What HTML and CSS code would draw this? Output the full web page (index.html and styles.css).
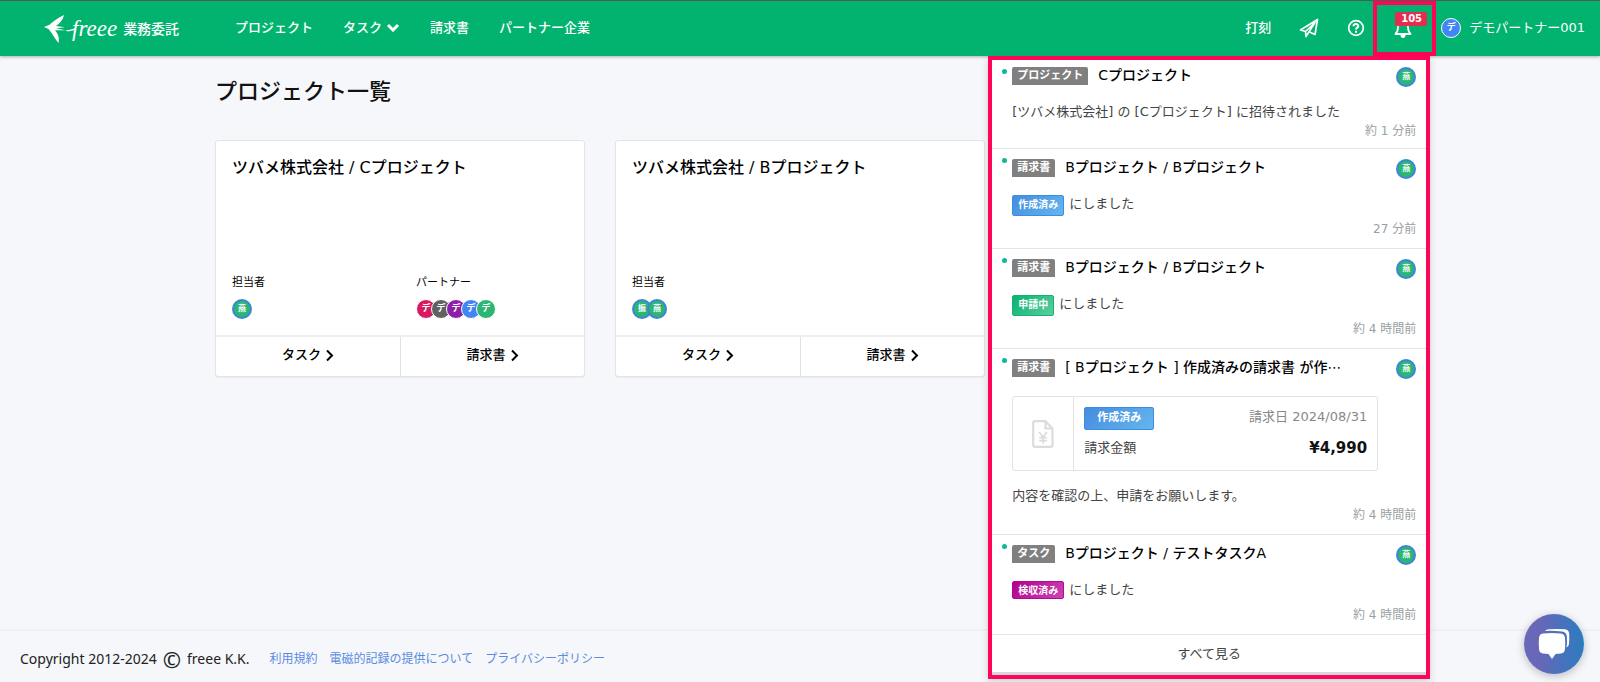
FILE: index.html
```html
<!DOCTYPE html>
<html lang="ja">
<head>
  <meta charset="UTF-8">
  <title>プロジェクト一覧 | freee 業務委託</title>
  <meta name="viewport" content="width=device-width, initial-scale=1.0">
  <link rel="stylesheet" href="styles.css">
</head>
<body>
  <header class="header">
    <a class="logo" href="#">
      <svg class="logo-bird" width="32" height="30" viewBox="0 0 32 30" fill="#fff">
        <path d="M0 13 L5.500 10.800 C9 7.500 14 4 20 1 C19 6 15.500 9.500 12 12 L21 13.200 L12 14.300 L21.500 16.200 L11 16.200 C14.500 20 15.500 24 14.500 29 C11 25 8 19 4.500 15 Z"/>
        <path d="M22.500 16.500 C25 17.500 27 15.500 32 15" fill="none" stroke="#fff" stroke-width="1.300"/>
      </svg>
      <span class="logo-name">freee</span>
      <span class="logo-product">業務委託</span>
    </a>
    <nav class="nav">
      <a href="#">プロジェクト</a>
      <a href="#">タスク<svg class="nav-arrow" width="14" height="9" viewBox="0 0 14 9"><path d="M2 2 L7 7 L12 2" fill="none" stroke="#fff" stroke-width="3"/></svg></a>
      <a href="#">請求書</a>
      <a href="#">パートナー企業</a>
    </nav>
    <div class="tools">
      <a class="clock" href="#">打刻</a>
      <button class="tool" aria-label="お知らせ">
        <svg width="20" height="20" viewBox="0 0 20 20" fill="none" stroke="#fff" stroke-width="1.700" stroke-linejoin="round"><path d="M1.500 12 L18.500 1.500 L16 16.500 L10 13.800 L7 18.500 L6.500 13.500 Z M6.500 13.500 L16 4.500 L10 13.800"/></svg>
      </button>
      <button class="tool" aria-label="ヘルプ">
        <svg width="18" height="18" viewBox="0 0 18 18" fill="none" stroke="#fff" stroke-width="2"><circle cx="9" cy="9" r="7.300" stroke-width="1.700"/><path d="M6.500 7.200 C6.700 4.300 11.500 4.500 11.300 7.200 C11.200 8.700 9 8.700 9 10.500"/><path d="M9 11.800 V13.800"/></svg>
      </button>
      <div class="notice">
        <button class="bell" aria-label="通知">
          <svg width="18" height="20" viewBox="0 0 18 20"><path d="M1.500 15 C4 12.500 4 11 4 8 C4 5 6 3 9 3 C12 3 14 5 14 8 C14 11 14 12.500 16.500 15 Z" fill="none" stroke="#fff" stroke-width="1.800" stroke-linejoin="round"/><path d="M6.500 16 H11.500 A2.500 3 0 0 1 6.500 16 Z" fill="#fff"/></svg>
          <span class="count">105</span>
        </button>
        <div class="panel">
          <article class="item">
            <div class="item-head">
              <span class="kind">プロジェクト</span>
              <h3>Cプロジェクト</h3>
              <span class="avatar staff">燕</span>
            </div>
            <div class="item-body">
              <p>[ツバメ株式会社] の [Cプロジェクト] に招待されました</p>
            </div>
            <time>約 1 分前</time>
          </article>
          <article class="item">
            <div class="item-head">
              <span class="kind">請求書</span>
              <h3>Bプロジェクト / Bプロジェクト</h3>
              <span class="avatar staff">燕</span>
            </div>
            <div class="item-body status-body">
              <span class="status created">作成済み</span>
              <p>にしました</p>
            </div>
            <time>27 分前</time>
          </article>
          <article class="item">
            <div class="item-head">
              <span class="kind">請求書</span>
              <h3>Bプロジェクト / Bプロジェクト</h3>
              <span class="avatar staff">燕</span>
            </div>
            <div class="item-body status-body">
              <span class="status applied">申請中</span>
              <p>にしました</p>
            </div>
            <time>約 4 時間前</time>
          </article>
          <article class="item">
            <div class="item-head">
              <span class="kind">請求書</span>
              <h3>[ Bプロジェクト ] 作成済みの請求書 が作⋯</h3>
              <span class="avatar staff">燕</span>
            </div>
            <div class="item-body">
              <div class="invoice">
                <div class="invoice-icon">
                  <svg width="22" height="28" viewBox="0 0 22 28" fill="none" stroke="#dcdcdc" stroke-width="2.200" stroke-linejoin="round"><path d="M3 1.200 H13.500 L20.500 8.500 V25 Q20.500 26.800 18.700 26.800 H3 Q1.200 26.800 1.200 25 V3 Q1.200 1.200 3 1.200 Z M13.500 1.500 V8.500 H20.500"/><path d="M7 12 L11 17 L15 12 M11 17 V23.500 M7.200 17.600 H14.800 M7.200 20.600 H14.800" stroke-width="1.700"/></svg>
                </div>
                <div class="invoice-info">
                  <div class="invoice-row">
                    <span class="status created wide">作成済み</span>
                    <span class="date">請求日 2024/08/31</span>
                  </div>
                  <div class="invoice-row">
                    <span>請求金額</span>
                    <strong class="amount">¥4,990</strong>
                  </div>
                </div>
              </div>
              <p>内容を確認の上、申請をお願いします。</p>
            </div>
            <time>約 4 時間前</time>
          </article>
          <article class="item">
            <div class="item-head">
              <span class="kind">タスク</span>
              <h3>Bプロジェクト / テストタスクA</h3>
              <span class="avatar staff">燕</span>
            </div>
            <div class="item-body status-body">
              <span class="status accepted">検収済み</span>
              <p>にしました</p>
            </div>
            <time>約 4 時間前</time>
          </article>
          <a class="see-all" href="#">すべて見る</a>
        </div>
      </div>
      <a class="user" href="#"><span class="avatar blue">デ</span>デモパートナー001</a>
    </div>
  </header>

  <main class="main">
    <h1>プロジェクト一覧</h1>
    <div class="projects">
      <section class="project">
        <h2>ツバメ株式会社 / Cプロジェクト</h2>
        <div class="members">
          <div>
            <div class="label">担当者</div>
            <div class="avatars"><span class="avatar staff">燕</span></div>
          </div>
          <div>
            <div class="label">パートナー</div>
            <div class="avatars">
              <span class="avatar red">デ</span>
              <span class="avatar gray">デ</span>
              <span class="avatar purple">デ</span>
              <span class="avatar blue">デ</span>
              <span class="avatar green">デ</span>
            </div>
          </div>
        </div>
        <div class="links">
          <a href="#">タスク<svg width="8" height="13" viewBox="0 0 8 13"><path d="M1 1.500 L6 6.500 L1 11.500" fill="none" stroke="#000" stroke-width="2"/></svg></a>
          <a href="#">請求書<svg width="8" height="13" viewBox="0 0 8 13"><path d="M1 1.500 L6 6.500 L1 11.500" fill="none" stroke="#000" stroke-width="2"/></svg></a>
        </div>
      </section>
      <section class="project">
        <h2>ツバメ株式会社 / Bプロジェクト</h2>
        <div class="members">
          <div>
            <div class="label">担当者</div>
            <div class="avatars"><span class="avatar staff">振</span><span class="avatar staff">燕</span></div>
          </div>
        </div>
        <div class="links">
          <a href="#">タスク<svg width="8" height="13" viewBox="0 0 8 13"><path d="M1 1.500 L6 6.500 L1 11.500" fill="none" stroke="#000" stroke-width="2"/></svg></a>
          <a href="#">請求書<svg width="8" height="13" viewBox="0 0 8 13"><path d="M1 1.500 L6 6.500 L1 11.500" fill="none" stroke="#000" stroke-width="2"/></svg></a>
        </div>
      </section>
    </div>
  </main>

  <footer class="footer">
    <div class="copyright">Copyright 2012-2024 <span class="copy-mark">©</span> freee K.K.</div>
    <a href="#">利用規約</a>
    <a href="#">電磁的記録の提供について</a>
    <a href="#">プライバシーポリシー</a>
  </footer>

  <button class="chat" aria-label="チャット">
    <svg width="32" height="32" viewBox="0 0 32 32" fill="#fff">
      <path d="M7 3 Q8 1.500 11 1.300 Q19 .500 27 1.300 Q31 1.700 31.200 6 Q31.500 11 31 16 Q30.800 18.500 28.500 19.500 Q29.500 14 28.800 8 Q28.300 4.200 24 3.600 Q15 2.500 7 3 Z"/>
      <path d="M5 5.600 Q14 4.600 23 5.600 Q26.600 6 27 10 Q27.500 15 27 21 Q26.700 25 23 25.500 L17.500 26 L14 31 L10.500 26 L5 25.500 Q1.300 25 1 21 Q.500 15 1 10 Q1.300 6 5 5.600 Z"/>
    </svg>
  </button>
</body>
</html>
```
FILE: styles.css
```css
* {
  box-sizing: border-box;
}
body {
  margin: 0;
  min-height: 100vh;
  display: flex;
  flex-direction: column;
  background-color: #f5f7fb;
  color: #222;
  font-family: "DejaVu Sans", "Noto Sans CJK JP", sans-serif;
  font-size: 13px;
  line-height: 20px;
}
h1, h2, h3, p {
  margin: 0;
}
a {
  color: inherit;
  text-decoration: none;
}
button {
  border: none;
  background: none;
  padding: 0;
  font-family: inherit;
  cursor: pointer;
}

/* header */
.header {
  display: flex;
  align-items: center;
  height: 56px;
  padding: 0 15px 0 44px;
  border-top: 1px solid #47604f;
  background-color: #02b370;
  color: #fff;
  box-shadow: 0 1px 3px rgba(0,0,0,0.3);
}
.logo {
  display: flex;
  align-items: center;
  width: 191px;
}
.logo-bird {
  margin-right: -4px;
}
.logo-name {
  font-family: "Liberation Serif", serif;
  font-style: italic;
  font-size: 23px;
  margin-right: 6px;
}
.logo-product {
  font-size: 14px;
  font-weight: 500;
}
.nav {
  display: flex;
  gap: 30px;
}
.nav a, .clock, .user {
  padding-bottom: 2px;
  font-weight: 500;
}
.nav-arrow {
  margin-left: 4px;
}
.tools {
  display: flex;
  align-items: center;
  height: 100%;
  margin-left: auto;
}
.tool {
  display: flex;
  margin-left: 28px;
  padding-bottom: 2px;
}
.notice {
  position: relative;
  height: 100%;
  margin: 0 5px 0 8px;
}
.bell {
  display: flex;
  align-items: center;
  justify-content: center;
  position: relative;
  width: 63px;
  height: 100%;
  padding-right: 3px;
  border: 4px solid #ff0558;
}
.count {
  position: absolute;
  top: 7px;
  left: 18px;
  padding: 0 5px 0 6px;
  border-radius: 2px;
  background-color: #e52d50;
  color: #fff;
  font-size: 10px;
  font-weight: bold;
  line-height: 14px;
}
.user {
  display: flex;
  align-items: center;
  gap: 8px;
  font-weight: 400;
}

/* avatars */
.avatar {
  flex: none;
  width: 20px;
  height: 20px;
  border: 1px solid #fff;
  border-radius: 50%;
  color: #fff;
  font-size: 9px;
  font-weight: bold;
  line-height: 17px;
  text-align: center;
}
.avatar.staff {
  border: 2px solid #3f83dc;
  line-height: 15px;
  font-size: 8px;
  background-color: #2bb673;
}
.avatar.red {
  background-color: #d81b60;
}
.avatar.gray {
  background-color: #616161;
}
.avatar.purple {
  background-color: #8e1fa8;
}
.avatar.blue {
  background-color: #4285f4;
}
.avatar.green {
  background-color: #2bb673;
}
.avatars {
  display: flex;
}
.avatars .avatar + .avatar {
  margin-left: -5px;
}

/* notification list */
.panel {
  position: absolute;
  top: 100%;
  right: 6px;
  z-index: 10;
  width: 442px;
  padding-bottom: 3px;
  border: 4px solid #ff0558;
  background: linear-gradient(#fff, #fff) no-repeat, #d5d8db;
  background-size: 100% calc(100% - 3px), auto;
  box-shadow: 0 3px 8px rgba(0,0,0,0.15);
  color: #444;
}
.item {
  position: relative;
  padding: 10px 10px 10px 20px;
  border-bottom: 1px solid #e3e7e9;
}
.item:first-child {
  padding-top: 7px;
  padding-bottom: 8px;
}
.item::before {
  content: "";
  position: absolute;
  top: 9px;
  left: 10px;
  width: 5px;
  height: 5px;
  border-radius: 50%;
  background-color: #10b894;
}
.item-head {
  display: flex;
  align-items: flex-start;
  height: 20px;
}
.kind {
  flex: none;
  padding: 0 5px;
  border-radius: 2px 2px 0 0;
  background-color: #808080;
  color: #fff;
  font-size: 11px;
  font-weight: bold;
  line-height: 18px;
}
.item-head h3 {
  margin: 0 auto 0 10px;
  color: #000;
  font-size: 14px;
  font-weight: 500;
  line-height: 16px;
  white-space: nowrap;
}
.item-body {
  padding-top: 14px;
}
.item-body p {
  padding-top: 1px;
}
.status-body {
  display: flex;
  gap: 5px;
}
.status {
  margin: 2px 0 4px;
  padding: 0 5px;
  border-radius: 2px;
  color: #fff;
  font-size: 10px;
  font-weight: bold;
  line-height: 17px;
  height: 21px;
}
.status.created {
  border: 1px solid #3a8ee0;
  background: linear-gradient(135deg, #468ce0, #65b6ee);
}
.status.applied {
  border: 1px solid #12b26f;
  background: linear-gradient(135deg, #06b36f, #5fcca0);
}
.status.accepted {
  height: 18px;
  border: 1px solid #b00b92;
  background: linear-gradient(135deg, #b3008f, #cc45b4);
  margin-bottom: 7px;
}
.status.wide {
  height: 23px;
  margin: 0;
  padding: 0 12px;
  font-size: 11px;
  line-height: 20px;
}
.item time {
  display: block;
  color: #999fa3;
  font-size: 12px;
  line-height: 18px;
  text-align: right;
}
.invoice {
  display: flex;
  height: 75px;
  margin: 3px 38px 14px 0;
  border: 1px solid #e3e3e3;
  border-radius: 3px;
}
.invoice-icon {
  display: flex;
  align-items: center;
  justify-content: center;
  width: 61px;
  border-right: 1px solid #e3e3e3;
}
.invoice-info {
  flex: 1;
  padding: 10px 10px 0;
}
.invoice-row {
  display: flex;
  justify-content: space-between;
  margin-bottom: 8px;
}
.date {
  color: #888;
}
.amount {
  color: #111;
  font-size: 15px;
}
.see-all {
  display: block;
  text-align: center;
  line-height: 37px;
}

/* project list */
.main {
  flex: 1;
  width: 100%;
  max-width: 1200px;
  margin: 0 auto;
  padding: 20px 15px;
}
h1 {
  color: #111;
  font-size: 22px;
  font-weight: 500;
  line-height: 32px;
}
.projects {
  display: grid;
  grid-template-columns: repeat(3, 1fr);
  gap: 30px;
  margin-top: 32px;
}
.project {
  border: 1px solid #e2e4e6;
  border-radius: 3px;
  background-color: #fff;
  color: #000;
  box-shadow: 0 1px 1px rgba(0,0,0,0.05);
}
.project h2 {
  min-height: 116px;
  padding: 15px 16px 0;
  font-size: 16px;
  font-weight: 500;
  line-height: 24px;
}
.members {
  display: grid;
  grid-template-columns: 1fr 1fr;
  padding: 17px 0 16px;
}
.members > div {
  padding-left: 16px;
}
.label {
  margin-bottom: 7px;
  font-size: 11px;
  line-height: 18px;
}
.links {
  display: grid;
  grid-template-columns: 1fr 1fr;
  border-top: 2px solid #efeff0;
}
.links a {
  display: flex;
  align-items: center;
  justify-content: center;
  gap: 5px;
  padding: 8px 0 11px;
  font-weight: 500;
}
.links a + a {
  border-left: 1px solid #dfe2e5;
}

/* footer */
.footer {
  display: flex;
  align-items: center;
  gap: 12px;
  height: 53px;
  padding: 4px 20px 0;
  border-top: 2px solid #eef0f2;
  font-family: "Noto Sans", "Noto Sans CJK JP", sans-serif;
  font-size: 12px;
}
.footer a {
  color: #5a8be0;
}
.copyright {
  display: flex;
  align-items: center;
  gap: 6px;
  margin-right: 8px;
  font-size: 14px;
}
.copy-mark {
  font-size: 22px;
}
.chat {
  position: fixed;
  right: 16px;
  bottom: 8px;
  display: flex;
  align-items: center;
  justify-content: center;
  width: 60px;
  height: 60px;
  border-radius: 50%;
  background: linear-gradient(90deg, #6867b8 25%, #2b7cc0);
  box-shadow: 0 2px 8px rgba(0,0,0,0.25);
}
```
